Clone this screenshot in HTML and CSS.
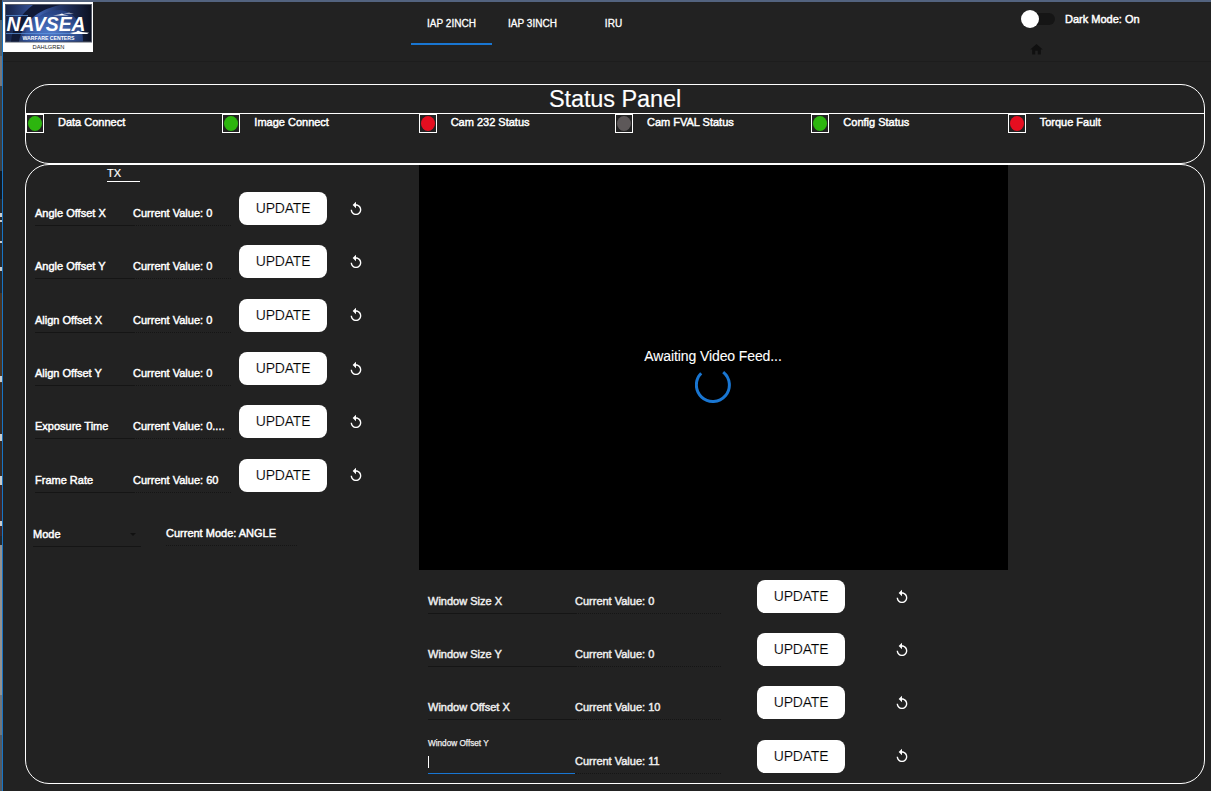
FILE: index.html
```
<!DOCTYPE html>
<html lang="en">
<head>
<meta charset="utf-8">
<title>IAP 2INCH</title>
<link rel="stylesheet" href="styles.css">
<script src="app.js" defer></script>
</head>
<body>
<svg class="defs" width="0" height="0">
  <symbol id="reset" viewBox="0 0 24 24"><path d="M12 5V1L7 6l5 5V7c3.310 0 6 2.690 6 6s-2.690 6-6 6-6-2.690-6-6H4c0 4.420 3.580 8 8 8s8-3.580 8-8-3.580-8-8-8z"/></symbol>
</svg>
<div class="desktop">
  <svg class="backdrop" width="2" height="791" viewBox="0 0 2 791">
    <rect width="2" height="791" fill="#26282b"/>
    <rect y="20" width="2" height="36" fill="#58636b"/>
    <rect y="56" width="2" height="30" fill="#77777a"/>
    <rect y="86" width="2" height="85" fill="#3c3f41"/>
    <rect y="171" width="2" height="28" fill="#111820"/>
    <path d="M0 213h2v4H0zM0 220h2v2H0zM0 241h2v2H0zM0 267h2v4H0z" fill="#ccc"/>
    <rect y="293" width="2" height="90" fill="#493523"/>
    <rect y="383" width="2" height="103" fill="#342a25"/>
    <rect y="486" width="2" height="50" fill="#3b282b"/>
    <path d="M0 376h2v6H0zM0 434h2v7H0zM0 476h2v9H0zM0 521h2v5H0z" fill="#ccc"/>
    <rect y="545" width="2" height="150" fill="#929292"/>
    <rect y="695" width="2" height="40" fill="#71767b"/>
    <rect y="735" width="2" height="56" fill="#535a62"/>
  </svg>
  <div class="app">
    <header class="header">
      <svg class="logo" width="90" height="50" viewBox="0 0 90 50">
        <defs>
          <linearGradient id="sky" x1="0" y1="0" x2="1" y2="0">
            <stop offset="0" stop-color="#172448"/><stop offset=".4" stop-color="#3c5fae"/><stop offset=".62" stop-color="#243768"/><stop offset="1" stop-color="#0c1122"/>
          </linearGradient>
          <radialGradient id="globe" cx=".5" cy=".7" r=".6">
            <stop offset="0" stop-color="#5c8ce0"/><stop offset="1" stop-color="#28458a"/>
          </radialGradient>
        </defs>
        <rect width="90" height="50" fill="#fff"/>
        <rect x="2" y="2" width="87" height="38.500" fill="#555b68"/>
        <rect x="3" y="3" width="85" height="36.500" fill="url(#sky)"/>
        <path d="M16 39.500C20 20 34 8 57 3H30C18 12 9 25 8 39.500z" fill="#111a36"/>
        <path d="M20 39.500C23 20 38 9 57 8c15 2 23 15 23 31.500z" fill="url(#globe)" opacity=".75"/>
        <path d="M3 13.500h22M3 31.500h66" stroke="#5f9ae4" stroke-width=".7"/>
        <path d="M50 13.500l6-1 3-1 2 1 5 1zM60 11.500l6-.8 5 .8z" fill="#fff"/>
        <text class="logo-name" x="3.500" y="29" textLength="79" lengthAdjust="spacingAndGlyphs">NAVSEA</text>
        <path d="M67 31l6-1 2-1.500 3 1.500 8 .700-2 1.300H70z" fill="#fff"/>
        <text class="logo-sub" x="19.500" y="38" textLength="52" lengthAdjust="spacingAndGlyphs">WARFARE CENTERS</text>
        <text class="logo-site" x="29.500" y="46.500" textLength="32" lengthAdjust="spacingAndGlyphs">DAHLGREN</text>
      </svg>
      <nav class="tabs">
        <a class="tab tab-active">IAP 2INCH</a>
        <a class="tab">IAP 3INCH</a>
        <a class="tab">IRU</a>
      </nav>
      <div class="theme">
        <div class="theme-row"><span class="switch"><span class="thumb"></span></span><span class="theme-label">Dark Mode: On</span></div>
        <svg class="home" width="15" height="15" viewBox="0 0 24 24"><path d="M10 20v-6h4v6h5v-8h3L12 3 2 12h3v8z"/></svg>
      </div>
    </header>
    <section class="status">
      <h1 class="status-title">Status Panel</h1>
      <div class="status-grid">
        <div class="status-item"><span class="lamp"><i class="dot green"></i></span>Data Connect</div>
        <div class="status-item"><span class="lamp"><i class="dot green"></i></span>Image Connect</div>
        <div class="status-item"><span class="lamp"><i class="dot red"></i></span>Cam 232 Status</div>
        <div class="status-item"><span class="lamp"><i class="dot grey"></i></span>Cam FVAL Status</div>
        <div class="status-item"><span class="lamp"><i class="dot green"></i></span>Config Status</div>
        <div class="status-item"><span class="lamp"><i class="dot red"></i></span>Torque Fault</div>
      </div>
    </section>
    <main class="panel">
      <section class="controls">
        <div class="tx">TX</div>
        <div class="rows" id="tx-rows"></div>
        <div class="mode-row">
          <div class="mode">Mode<span class="caret"></span></div>
          <div class="mode-current">Current Mode: ANGLE</div>
        </div>
      </section>
      <section class="feed">
        <div class="video">
          <div class="video-text">Awaiting Video Feed...</div>
          <svg class="spinner" width="36" height="36" viewBox="0 0 36 36"><path d="M6.200 6.300A16.500 16.500 0 1 0 28.200 5.100" fill="none" stroke="#1976d2" stroke-width="3"/></svg>
        </div>
        <div class="rows rows-wide" id="window-rows"></div>
      </section>
    </main>
  </div>
</div>
</body>
</html>
```
FILE: styles.css
```
* { box-sizing: border-box; }
body {
  margin: 0;
  width: 1211px;
  height: 791px;
  overflow: hidden;
  background: #222;
  color: #fff;
  font: 11px/14px "Liberation Sans", Arial, sans-serif;
  -webkit-text-stroke: .45px currentColor;
}
.defs { position: absolute; }
.desktop { display: flex; height: 791px; }
.backdrop { flex: none; }
.app {
  flex: 1;
  border-left: 1px solid #1874c4;
  border-top: 2px solid #53637f;
}
.header {
  display: grid;
  grid-template-columns: 408px 243px 367px 1fr;
  height: 60px;
  border-bottom: 1px solid #1d1d1d;
}
.logo { display: block; }
.logo-name { font: italic bold 21px "Liberation Sans", Arial, sans-serif; fill: #fff; }
.logo-sub { font: bold 5.5px "Liberation Sans", Arial, sans-serif; fill: #fff; -webkit-text-stroke: 0; }
.logo-site { font: 6px "Liberation Sans", Arial, sans-serif; fill: #222; -webkit-text-stroke: 0; }
.tabs { display: flex; height: 43px; }
.tab {
  flex: 1;
  text-align: center;
  font-size: 10px;
  line-height: 43px;
  letter-spacing: .02px;
  -webkit-text-stroke-width: .3px;
}
.tab-active { border-bottom: 2px solid #1976d2; }
.theme { grid-column: 4; padding-top: 8px; }
.theme-row { display: flex; align-items: center; height: 18px; }
.switch {
  width: 34px;
  height: 12px;
  margin-right: 10px;
  border-radius: 6px;
  background: #151515;
  display: flex;
  align-items: center;
}
.thumb { flex: none; width: 18px; height: 18px; border-radius: 50%; background: #fff; }
.home { display: block; margin: 14px 0 0 7.5px; fill: #101010; }
.status {
  width: 1180px;
  height: 80px;
  margin: 22px 0 0 22px;
  border: 1px solid #fff;
  border-radius: 24px;
}
.status-title {
  margin: 0;
  height: 29px;
  border-bottom: 1px solid #fff;
  text-align: center;
  font-size: 23.5px;
  font-weight: 400;
  line-height: 28px;
  letter-spacing: -.1px;
  -webkit-text-stroke: .15px currentColor;
}
.status-grid { display: grid; grid-template-columns: repeat(6, 1fr); }
.status-item { display: flex; gap: 14px; line-height: 17px; }
.lamp {
  display: flex;
  justify-content: center;
  align-items: center;
  width: 18px;
  height: 19px;
  border: 1px solid #fff;
}
.dot { width: 14px; height: 15px; border-radius: 50%; }
.green { background: #2db50f; }
.red { background: #e50e20; }
.grey { background: #5d5859; }
.panel {
  display: grid;
  grid-template-columns: 393px 589px 1fr;
  width: 1180px;
  height: 620px;
  margin-left: 22px;
  border: 1px solid #fff;
  border-radius: 24px;
}
.tx { width: 33px; height: 17px; margin-left: 81px; line-height: 16px; border-bottom: 1px solid #fff; -webkit-text-stroke: .2px currentColor; }
.rows { display: grid; grid-auto-rows: 53.35px; margin: 10px 0 0 9px; }
.row { display: grid; grid-template-columns: 98px 98px 96px 1fr; height: 34px; }
.field { height: 34px; padding-top: 14px; border-bottom: 1px solid #151515; white-space: nowrap; }
.value { border-bottom-style: dotted; }
.update {
  justify-self: end;
  width: 88px;
  height: 33px;
  padding: 0;
  border: 0;
  border-radius: 8px;
  background: #fff;
  color: #000;
  font: 14px/33px "Liberation Sans", Arial, sans-serif;
  letter-spacing: -.2px;
  text-align: center;
  -webkit-text-stroke: .14px #fff;
}
.reset { width: 16px; height: 16px; margin: 8.5px 0 0 21px; fill: #fff; }
.mode-row { display: grid; grid-template-columns: 108px 131px; gap: 25px; margin-left: 7px; }
.mode { display: flex; justify-content: space-between; align-items: center; height: 35px; padding: 10px 5px 0 0; border-bottom: 1px solid #151515; }
.caret { border: 3px solid transparent; border-top-color: #111; border-bottom: 0; }
.mode-current { height: 34px; padding-top: 14px; border-bottom: 1px dotted #151515; }
.video {
  display: flex;
  flex-direction: column;
  align-items: center;
  height: 405px;
  padding: 183px 1px 0 0;
  background: #000;
}
.video-text { font-size: 14px; line-height: 16px; letter-spacing: -.1px; -webkit-text-stroke: .1px currentColor; }
.spinner { margin-top: 3px; }
.rows-wide { grid-auto-rows: 53.2px; }
.rows-wide .row { grid-template-columns: 147px 146px 124px 1fr; color: #eee; }
.rows-wide .reset { margin-left: 49px; }
.focused { border-bottom-color: #1976d2; padding-top: 0; font-size: 8.2px; line-height: 7px; -webkit-text-stroke-width: .25px; }
.cursor { display: block; width: 1px; height: 12px; margin-top: 9px; background: #fff; }
```
FILE: app.js
```
const txRows = [
  ["Angle Offset X", "0"],
  ["Angle Offset Y", "0"],
  ["Align Offset X", "0"],
  ["Align Offset Y", "0"],
  ["Exposure Time", "0...."],
  ["Frame Rate", "60"],
];
const windowRows = [
  ["Window Size X", "0"],
  ["Window Size Y", "0"],
  ["Window Offset X", "10"],
  ["Window Offset Y", "11", true],
];

function render(id, rows) {
  document.getElementById(id).innerHTML = rows.map(([label, value, focused]) => `
    <div class="row">
      <div class="field${focused ? " focused" : ""}">${label}${focused ? '<span class="cursor"></span>' : ""}</div>
      <div class="field value">Current Value: ${value}</div>
      <button class="update">UPDATE</button>
      <svg class="reset"><use href="#reset"/></svg>
    </div>`).join("");
}

render("tx-rows", txRows);
render("window-rows", windowRows);
```
